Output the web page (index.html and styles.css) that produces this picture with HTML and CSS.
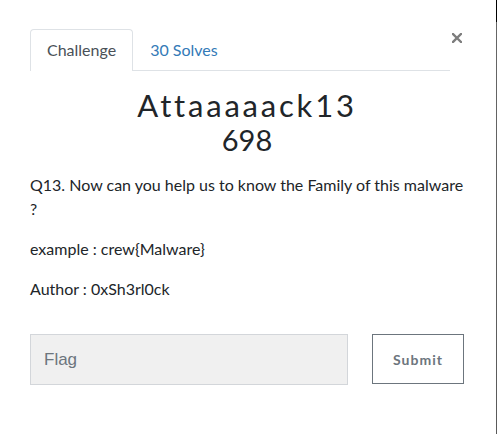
FILE: index.html
```html
<!DOCTYPE html>
<html>
<head>
<meta charset="utf-8">
<link rel="stylesheet" href="styles.css">
</head>
<body>
<div class="frame">
  <div class="modal">
    <div class="head">
      <ul class="tabs">
        <li class="tab active">Challenge</li>
        <li class="tab link">30 Solves</li>
      </ul>
      <button class="close" type="button" aria-label="Close">
        <svg width="10" height="10" viewBox="0 0 10 10"><path d="M1 1 L9 9 M9 1 L1 9" stroke="#7d7d7d" stroke-width="2.4" stroke-linecap="square" fill="none"/></svg>
      </button>
    </div>
    <h3 class="title">Attaaaaack13</h3>
    <h4 class="value">698</h4>
    <div class="desc">
      <p>Q13. Now can you help us to know the Family of this malware ?</p>
      <p>example : crew{Malware}</p>
      <p>Author : 0xSh3rl0ck</p>
    </div>
    <form class="submit-row">
      <input class="flag" type="text" placeholder="Flag">
      <button class="submit" type="button">Submit</button>
    </form>
  </div>
</div>
</body>
</html>
```

FILE: styles.css
```css
html, body {
  margin: 0;
  padding: 0;
  background: #fff;
}
.frame {
  width: 496px;
  height: 434px;
  border-right: 1px solid #666;
  border-image: linear-gradient(to bottom, #000 0, #000 23px, #666 23px, #5a5a5a 100%) 1;
  box-sizing: content-box;
  overflow: hidden;
}
.modal {
  padding: 29px 0 0 30px;
  font-family: "Lato", "Noto Sans", sans-serif;
  font-size: 16px;
  line-height: 24px;
  color: #212529;
}
.head {
  display: flex;
  align-items: flex-start;
}
.tabs {
  display: flex;
  list-style: none;
  margin: 0;
  padding: 0;
  width: 420px;
  border-bottom: 1px solid #dee2e6;
}
.tab {
  padding: 8px 16px;
  border: 1px solid transparent;
  border-bottom: 0;
  border-radius: 4px 4px 0 0;
  margin-bottom: -1px;
  padding-bottom: 9px;
}
.tab.active {
  color: #495057;
  background: #fff;
  border-color: #dee2e6;
}
.tab.link {
  color: #337ab7;
}
.close {
  margin: 4px 0 0 2px;
  padding: 0;
  border: 0;
  background: none;
  width: 10px;
  height: 10px;
  display: flex;
}
.title {
  margin: 16px 0 0 0;
  width: 434px;
  text-align: center;
  font-weight: 400;
  font-size: 31px;
  line-height: 36px;
  letter-spacing: 2.8px;
  color: #212529;
}
.value {
  margin: 0 0 16px 0;
  width: 434px;
  text-align: center;
  font-weight: 400;
  font-size: 29px;
  line-height: 34px;
  color: #212529;
}
.desc {
  width: 436px;
}
.desc p {
  margin: 0 0 16px 0;
}
.submit-row {
  display: flex;
  gap: 24px;
  margin-top: 33px;
  align-items: flex-start;
}
.flag {
  box-sizing: border-box;
  width: 318px;
  height: 51px;
  margin: 0;
  padding: 0 13px;
  background: #f0f0f0;
  border: 1px solid #d3d6da;
  border-radius: 0;
  font-family: "Liberation Sans", Arial, sans-serif;
  font-size: 17px;
  color: #495057;
  outline: none;
}
.flag::placeholder {
  color: #6c757d;
}
.submit {
  box-sizing: border-box;
  width: 92px;
  height: 50px;
  margin: 0;
  padding: 0;
  background: #fff;
  border: 1px solid #6c757d;
  border-radius: 0;
  font-family: "Lato", sans-serif;
  font-weight: 700;
  font-size: 14px;
  letter-spacing: 1px;
  color: #6c757d;
}
```
